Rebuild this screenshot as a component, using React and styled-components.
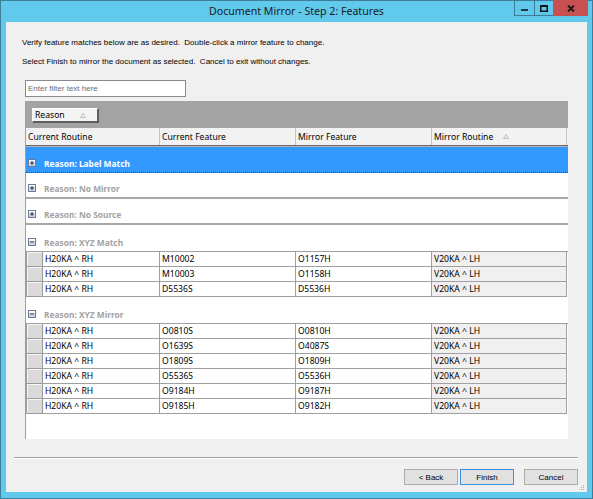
import React from 'react';
import styled, { createGlobalStyle } from 'styled-components';

const Global = createGlobalStyle`
  html, body { margin: 0; padding: 0; width: 593px; height: 499px; overflow: hidden; background: #60c9ec; }
  * { box-sizing: border-box; }
`;

const Window = styled.div`
  width: 593px;
  height: 499px;
  background: #60c9ec;
  border: 1px solid #3d7f9b;
  display: flex;
  flex-direction: column;
`;

const TitleBar = styled.div`
  height: 21px;
  flex: none;
  display: grid;
  grid-template-columns: 1fr auto 1fr;
  align-items: center;
`;

const Title = styled.div`
  grid-column: 2;
  font-family: "Noto Sans", sans-serif;
  font-size: 10.6px;
  color: #1b1b1b;
  line-height: 21px;
  white-space: nowrap;
`;

const Controls = styled.div`
  grid-column: 3;
  justify-self: end;
  align-self: start;
  margin-top: -1px;
  margin-right: 4px;
  display: flex;
  height: 16px;
`;

const CtlButton = styled.div`
  width: ${p => p.$w}px;
  height: 16px;
  display: flex;
  align-items: center;
  justify-content: center;
  background: ${p => (p.$close ? '#c75050' : 'transparent')};
  border: ${p => (p.$close ? 'none' : '1px solid #3c7c99')};
  margin-left: ${p => (p.$first ? 0 : -1)}px;
`;

const Client = styled.div`
  flex: 1;
  margin: 0 5px 6px 5px;
  background: #f0f0f0;
  display: flex;
  flex-direction: column;
  position: relative;
`;

const Instructions = styled.div`
  margin: 16px 0 0 16px;
  display: flex;
  flex-direction: column;
  gap: 9px;
`;

const Line = styled.div`
  font-family: "Liberation Sans", Arial, sans-serif;
  font-size: 8px;
  line-height: 10px;
  color: #000;
  white-space: pre;
`;

const FilterBox = styled.div`
  margin: 13px 0 0 19px;
  width: 161px;
  height: 17px;
  background: #fff;
  border: 1px solid #8a8a8a;
  padding-left: 2px;
  display: flex;
  align-items: center;
  font-family: "Liberation Sans", Arial, sans-serif;
  font-size: 8px;
  color: #6d6d6d;
`;

const Grid = styled.div`
  margin: 4px 19px 0 19px;
  height: 338px;
  flex: none;
  background: #fff;
  border-left: 1px solid #a0a0a0;
  display: flex;
  flex-direction: column;
  font-family: "Noto Sans", sans-serif;
  font-size: 8.6px;
`;

const GroupBand = styled.div`
  height: 27px;
  background: #a3a3a3;
  padding: 7px 0 0 6px;
  flex: none;
`;

const Chip = styled.div`
  width: 67px;
  height: 15px;
  background: #f4f4f4;
  border-top: 1px solid #fff;
  border-left: 1px solid #fff;
  border-right: 2px solid #5e5e5e;
  border-bottom: 2px solid #5e5e5e;
  display: flex;
  align-items: center;
  padding-left: 2px;
  gap: 15px;
  color: #000;
`;

const HeaderRow = styled.div`
  height: 18px;
  flex: none;
  display: grid;
  grid-template-columns: 134px 136px 136px 135px 1fr;
  background: #f2f2f2;
  border-bottom: 1px solid #6a6a6a;
  box-shadow: 0 1px 0 #b4b4b4;
  position: relative;
  z-index: 1;
`;

const HeaderCell = styled.div`
  display: flex;
  align-items: center;
  gap: 10px;
  padding-left: 2px;
  color: #000;
  border-right: ${p => (p.$last ? 'none' : '1px solid #c4c4c4')};
  white-space: nowrap;
  overflow: hidden;
`;

const Body = styled.div`
  flex: 1;
  display: flex;
  flex-direction: column;
  padding-top: 1px;
`;

const GroupRow = styled.div`
  height: 26px;
  flex: none;
  display: flex;
  align-items: flex-end;
  padding: 0 0 3px 2px;
  gap: 8px;
  background: ${p => (p.$selected ? '#3399ff' : '#fff')};
  border-bottom: ${p =>
    p.$expanded ? 'none' : p.$selected ? '1px dotted #26507c' : '2px solid #a7a7a7'};
  font-weight: 700;
  font-size: 8.4px;
  color: ${p => (p.$selected ? '#fff' : '#a3a3a3')};
  line-height: 11px;
  white-space: nowrap;
`;

const Expander = styled.div`
  width: 8px;
  height: 8px;
  margin-bottom: 2px;
  border: 1px solid #6b7d9a;
  background: linear-gradient(#ffffff, #c4cedc);
  display: flex;
  align-items: center;
  justify-content: center;
  flex: none;
`;

const Rows = styled.div`
  border-top: 1px solid #a0a0a0;
  flex: none;
`;

const DataRow = styled.div`
  height: 15px;
  display: grid;
  grid-template-columns: 17px 117px 136px 136px 135px;
`;

const RowHead = styled.div`
  background: #dadada;
  border-left: 1px solid #9a9a9a;
  border-right: 1px solid #9a9a9a;
  border-bottom: 1px solid #9a9a9a;
  box-shadow: inset 1px 1px 0 #f7f7f7;
`;

const Cell = styled.div`
  background: ${p => (p.$shade ? '#f0f0f0' : '#fff')};
  border-right: 1px solid #a0a0a0;
  border-bottom: 1px solid #a0a0a0;
  padding-left: 2px;
  line-height: 14px;
  color: #000;
  white-space: nowrap;
  overflow: hidden;
`;

const Separator = styled.div`
  margin: 18px 9px 0 8px;
  height: 2px;
  border-top: 1px solid #a0a0a0;
  border-bottom: 1px solid #ffffff;
  flex: none;
`;

const ButtonRow = styled.div`
  margin-top: 10px;
  padding-right: 9px;
  display: flex;
  justify-content: flex-end;
  flex: none;
`;

const Button = styled.div`
  width: 54px;
  height: 16px;
  margin-left: ${p => p.$ml}px;
  background: #e1e1e1;
  border: 1px solid ${p => (p.$default ? '#3d8ee0' : '#adadad')};
  display: flex;
  align-items: center;
  justify-content: center;
  font-family: "Liberation Sans", Arial, sans-serif;
  font-size: 8px;
  color: #000;
`;

const Grip = styled.svg`
  position: absolute;
  right: 2px;
  bottom: 1px;
`;

const SortGlyph = () => (
  <svg width="6" height="5" viewBox="0 0 6 5">
    <path d="M3 0.5 L5.5 4.5 L0.5 4.5 Z" fill="none" stroke="#b4b4b4" strokeWidth="0.8" />
  </svg>
);

const PlusMinus = ({ plus }) => (
  <svg width="4" height="4" viewBox="0 0 4 4">
    <rect x="0" y="1.5" width="4" height="1" fill="#25304a" />
    {plus && <rect x="1.5" y="0" width="1" height="4" fill="#25304a" />}
  </svg>
);

const matchRows = [
  ['H20KA ^ RH', 'M10002', 'O1157H', 'V20KA ^ LH'],
  ['H20KA ^ RH', 'M10003', 'O1158H', 'V20KA ^ LH'],
  ['H20KA ^ RH', 'D5536S', 'D5536H', 'V20KA ^ LH'],
];

const mirrorRows = [
  ['H20KA ^ RH', 'O0810S', 'O0810H', 'V20KA ^ LH'],
  ['H20KA ^ RH', 'O1639S', 'O4087S', 'V20KA ^ LH'],
  ['H20KA ^ RH', 'O1809S', 'O1809H', 'V20KA ^ LH'],
  ['H20KA ^ RH', 'O5536S', 'O5536H', 'V20KA ^ LH'],
  ['H20KA ^ RH', 'O9184H', 'O9187H', 'V20KA ^ LH'],
  ['H20KA ^ RH', 'O9185H', 'O9182H', 'V20KA ^ LH'],
];

const RowSet = ({ rows }) => (
  <Rows>
    {rows.map((r, i) => (
      <DataRow key={i}>
        <RowHead />
        <Cell>{r[0]}</Cell>
        <Cell>{r[1]}</Cell>
        <Cell>{r[2]}</Cell>
        <Cell $shade>{r[3]}</Cell>
      </DataRow>
    ))}
  </Rows>
);

export default function App() {
  return (
    <>
      <Global />
      <Window>
        <TitleBar>
          <Title>Document Mirror - Step 2: Features</Title>
          <Controls>
            <CtlButton $w={21} $first>
              <svg width="7" height="3" viewBox="0 0 7 3" style={{ marginTop: 5 }}>
                <rect width="7" height="2" fill="#1c3a4a" />
              </svg>
            </CtlButton>
            <CtlButton $w={20}>
              <svg width="8" height="7" viewBox="0 0 8 7">
                <rect x="0.75" y="0.75" width="6.5" height="5.5" fill="none" stroke="#111" strokeWidth="1.5" />
                <rect x="0" y="0" width="8" height="2" fill="#111" />
              </svg>
            </CtlButton>
            <CtlButton $w={35} $close>
              <svg width="8" height="7" viewBox="0 0 8 7">
                <path d="M1 0.5 L7 6.5 M7 0.5 L1 6.5" stroke="#1a1a1a" strokeWidth="1.9" />
              </svg>
            </CtlButton>
          </Controls>
        </TitleBar>
        <Client>
          <Instructions>
            <Line>{'Verify feature matches below are as desired.  Double-click a mirror feature to change.'}</Line>
            <Line>{'Select Finish to mirror the document as selected.  Cancel to exit without changes.'}</Line>
          </Instructions>
          <FilterBox>Enter filter text here</FilterBox>
          <Grid>
            <GroupBand>
              <Chip>
                <span>Reason</span>
                <SortGlyph />
              </Chip>
            </GroupBand>
            <HeaderRow>
              <HeaderCell>Current Routine</HeaderCell>
              <HeaderCell>Current Feature</HeaderCell>
              <HeaderCell>Mirror Feature</HeaderCell>
              <HeaderCell>
                <span>Mirror Routine</span>
                <SortGlyph />
              </HeaderCell>
              <HeaderCell $last />
            </HeaderRow>
            <Body>
              <GroupRow $selected>
                <Expander><PlusMinus plus /></Expander>
                <span>Reason: Label Match</span>
              </GroupRow>
              <GroupRow>
                <Expander><PlusMinus plus /></Expander>
                <span>Reason: No Mirror</span>
              </GroupRow>
              <GroupRow>
                <Expander><PlusMinus plus /></Expander>
                <span>Reason: No Source</span>
              </GroupRow>
              <GroupRow $expanded>
                <Expander><PlusMinus /></Expander>
                <span>Reason: XYZ Match</span>
              </GroupRow>
              <RowSet rows={matchRows} />
              <GroupRow $expanded>
                <Expander><PlusMinus /></Expander>
                <span>Reason: XYZ Mirror</span>
              </GroupRow>
              <RowSet rows={mirrorRows} />
            </Body>
          </Grid>
          <Separator />
          <ButtonRow>
            <Button $ml={0}>&lt; Back</Button>
            <Button $ml={2} $default>Finish</Button>
            <Button $ml={10}>Cancel</Button>
          </ButtonRow>
          <Grip width="7" height="7" viewBox="0 0 7 7">
            {[[5, 1], [5, 3], [3, 3], [5, 5], [3, 5], [1, 5]].map(([x, y], i) => (
              <rect key={i} x={x} y={y} width="1" height="1" fill="#b0b0b0" />
            ))}
          </Grip>
        </Client>
      </Window>
    </>
  );
}
